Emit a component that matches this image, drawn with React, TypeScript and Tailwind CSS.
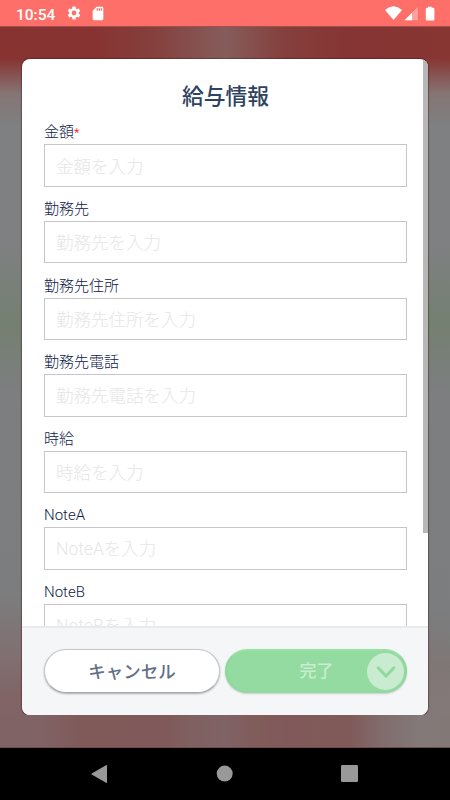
const fields = [
  { label: "金額", placeholder: "金額を入力", required: true },
  { label: "勤務先", placeholder: "勤務先を入力" },
  { label: "勤務先住所", placeholder: "勤務先住所を入力" },
  { label: "勤務先電話", placeholder: "勤務先電話を入力" },
  { label: "時給", placeholder: "時給を入力" },
  { label: "NoteA", placeholder: "NoteAを入力" },
  { label: "NoteB", placeholder: "NoteBを入力" },
];

function StatusBar() {
  return (
    <header className="h-[26px] shrink-0 bg-[#ff6f69] flex items-center pl-4 pr-[15px] text-white">
      <span className="text-[15.5px] leading-[26px] font-medium w-[39px] whitespace-nowrap pt-[3px]">10:54</span>
      <svg className="ml-[11px] w-4 h-4" viewBox="0 0 24 24" fill="currentColor">
        <path d="M19.14 12.94c.04-.3.06-.61.06-.94s-.02-.64-.07-.94l2.03-1.58a.49.49 0 0 0 .12-.61l-1.92-3.32a.49.49 0 0 0-.59-.22l-2.39.96a7 7 0 0 0-1.62-.94l-.36-2.54a.48.48 0 0 0-.48-.41h-3.84a.47.47 0 0 0-.47.41l-.36 2.54c-.59.24-1.13.57-1.62.94l-2.39-.96a.48.48 0 0 0-.59.22L2.74 8.87a.47.47 0 0 0 .12.61l2.03 1.58c-.05.3-.09.63-.09.94s.02.64.07.94l-2.03 1.58a.49.49 0 0 0-.12.61l1.92 3.32c.12.22.37.29.59.22l2.39-.96c.5.38 1.03.7 1.62.94l.36 2.54c.05.24.24.41.48.41h3.84c.24 0 .44-.17.47-.41l.36-2.54a6.9 6.9 0 0 0 1.62-.94l2.39.96c.22.08.47 0 .59-.22l1.92-3.32a.47.47 0 0 0-.12-.61zM12 15.6a3.6 3.6 0 1 1 0-7.2 3.6 3.6 0 0 1 0 7.2z" />
      </svg>
      <svg className="ml-2 w-4 h-[17px]" viewBox="0 0 24 24" fill="currentColor">
        <path d="M18 2h-8L4.02 8 4 20c0 1.1.9 2 2 2h12c1.1 0 2-.9 2-2V4c0-1.1-.9-2-2-2zm-6 6h-2V4h2v4zm3 0h-2V4h2v4zm3 0h-2V4h2v4z" />
      </svg>
      <svg className="ml-auto w-[50px] h-[15px]" viewBox="0 0 50 15" fill="currentColor">
        <path d="M0 4Q8.5-3.4 17 4L8.5 14z" />
        <path d="M32.8 1v13.3H19.5z" opacity=".35" />
        <path d="M27 6.7v7.6h-7.5z" />
        <path d="M43 1.7V.7h3.7v1h1.5q1.2 0 1.2 1.2v10.4q0 1.2-1.2 1.2H42q-1.2 0-1.2-1.2V2.9q0-1.2 1.2-1.2z" />
      </svg>
    </header>
  );
}

function Field({ label, placeholder, required }: { label: string; placeholder: string; required?: boolean }) {
  return (
    <div className="mb-[11.2px]">
      <div className="h-[23px] leading-[23px] text-[15px] font-light text-[#0d2146]">
        {label}
        {required && <span className="text-[#ff0000] text-[13px]">*</span>}
      </div>
      <input
        className="block w-full h-[42.4px] border border-[#c5c5ca] px-[11px] pt-[2px] text-[17.5px] font-light bg-white placeholder:text-[#e6e6e6] outline-none"
        placeholder={placeholder}
      />
    </div>
  );
}

function NavBar() {
  return (
    <footer className="h-[52px] shrink-0 bg-black">
      <svg className="block w-full h-full" viewBox="0 0 450 52" fill="#999">
        <path d="M91.7 25.6 106 17.2q1-.5 1 .5v16.6q0 1-1 .5L91.7 26.4q-.7-.4 0-.8z" />
        <circle cx="224.7" cy="25.6" r="8" />
        <rect x="341" y="17" width="17" height="17" rx="1.2" />
      </svg>
    </footer>
  );
}

export default function App() {
  return (
    <div className="w-[450px] h-[800px] overflow-hidden flex flex-col font-[Roboto,'Noto_Sans_CJK_JP',sans-serif]">
      <StatusBar />
      {/* dimmed, blurred screen behind the dialog; the two edges fade differently */}
      <main className="h-[722px] shrink-0 flex flex-col [background:linear-gradient(to_bottom,#873331_0,#873331_32px,#857575_68px,#7e8081_100px,#7e8081_220px,#748071_298px,#7c7e7f_365px,#7c7d7e_565px,#807071_630px,#806466_670px,#806365_722px)_left/50%_100%_no-repeat,linear-gradient(to_bottom,#873632_0,#873632_32px,#857575_68px,#7e8081_100px,#7e8081_220px,#748071_298px,#7c7e7f_365px,#7b7d7e_585px,#7f7776_640px,#837978_680px,#827876_722px)_right/50%_100%_no-repeat]">
        <div className="h-[33px] shrink-0 border-t border-[#a04f4c] bg-[linear-gradient(to_right,#873331_0,#873332_95px,#85403d_155px,#855d5c_225px,#853f3c_285px,#863434_350px,#873632_450px)]" />
        <div className="mx-[22px] h-[655.5px] shrink-0 rounded-[8px] overflow-hidden bg-white flex flex-col shadow-[0_0_1px_0.5px_rgba(65,20,20,0.4)]">
          <div className="flex-1 min-h-0 flex overflow-hidden">
            <div className="flex-1 pl-[22px] pr-[16px]">
              <h1 className="pt-[21px] h-[62.4px] text-center text-[21.8px] leading-[34px] font-medium text-[#2f4361]">給与情報</h1>
              {fields.map((f) => (
                <Field key={f.label} {...f} />
              ))}
            </div>
            <div className="w-[5px] h-[474px] shrink-0 bg-[#b7b7b7]" />
          </div>
          <div className="h-[88.5px] shrink-0 border-t-2 border-[#e9eaec] bg-[#f4f6f8] flex items-start gap-[5px] pl-[22px] pr-[21px] pt-[21px]">
            <button className="w-[176px] shrink-0 h-[43.5px] rounded-full bg-white border border-[#c3c6cd] border-b-[#a6aab4] shadow-[0_1px_2px_rgba(0,0,0,0.3)] pt-[2px] text-[17.5px] font-medium text-[#62708a]">
              キャンセル
            </button>
            <button className="w-[182px] shrink-0 h-[43.5px] rounded-full bg-[#93dba0] border-2 border-t-[#98e2a6] border-x-[#8dd99b] border-b-[#91d99e] shadow-[0_1px_2px_rgba(0,0,0,0.18)] flex items-center text-[17px] text-[#c9edd0]">
              <span className="flex-1 text-center pl-[39px] pt-[2px] font-medium">完了</span>
              <span className="mr-[1px] mt-px size-[37px] rounded-full bg-[#c9ecd1] flex items-center justify-center">
                <svg className="w-5 h-4 mt-px" viewBox="0 0 20 16" fill="none" stroke="#91d99e" strokeWidth="3.2" strokeLinecap="round" strokeLinejoin="round">
                  <path d="M2.3 4 10 12l7.7-8" />
                </svg>
              </span>
            </button>
          </div>
        </div>
        <div className="flex-1 border-b border-[#704b4c] bg-[linear-gradient(to_right,#806365_0,#806365_40px,#805959_84px,#80595a_165px,#806060_190px,#806366_225px,#805d5b_250px,#81595a_285px,#805a59_350px,#806d6c_382px,#837978_418px,#827876_450px)]" />
      </main>
      <NavBar />
    </div>
  );
}
